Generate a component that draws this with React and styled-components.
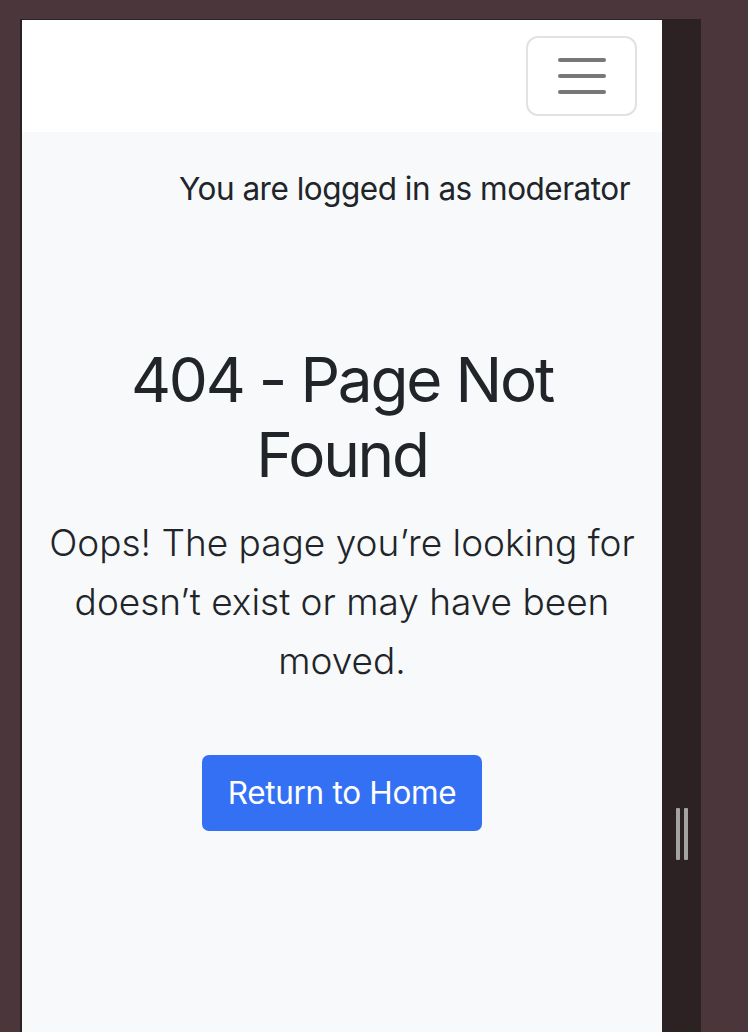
import React from 'react'
import styled, { createGlobalStyle } from 'styled-components'

const GlobalStyle = createGlobalStyle`
  html, body {
    margin: 0;
    padding: 0;
    background: #4a363b;
    height: 100%;
    overflow: hidden;
  }
  body {
    font-family: Inter, "Noto Sans", "Liberation Sans", sans-serif;
    color: #212529;
  }
`

const Desk = styled.div`
  display: flex;
  padding: 19px 0 0 20px;
  height: 1032px;
  box-sizing: border-box;
`

const Device = styled.div`
  display: flex;
  border-top: 1px solid #2a2124;
  border-left: 2px solid #2a2124;
`

const Screen = styled.div`
  width: 640px;
  display: flex;
  flex-direction: column;
  background: #f8f9fa;
`

const Navbar = styled.nav`
  height: 112px;
  background: #fff;
  display: flex;
  align-items: flex-start;
  justify-content: flex-end;
  padding: 16px 25px 0;
  box-sizing: border-box;
`

const Toggler = styled.button`
  width: 111px;
  height: 80px;
  border: 2px solid #e2e2e2;
  border-radius: 12px;
  background: transparent;
  display: flex;
  flex-direction: column;
  align-items: center;
  justify-content: center;
  gap: 12px;
  padding: 0;
`

const TogglerBar = styled.span`
  display: block;
  width: 48px;
  height: 4px;
  border-radius: 2px;
  background: #777;
`

const Main = styled.main`
  display: flex;
  flex-direction: column;
  padding: 0 24px;
`

const UserLine = styled.p`
  margin: 33px 8px 0 0;
  text-align: right;
  font-size: 31.5px;
  letter-spacing: -0.5px;
  line-height: 47px;
`

const NotFound = styled.section`
  margin-top: 130px;
  text-align: center;
  display: flex;
  flex-direction: column;
  align-items: center;
`

const Title = styled.h1`
  margin: 0;
  font-size: 62px;
  font-weight: 400;
  letter-spacing: -2.2px;
  line-height: 75px;
  max-width: 460px;
`

const Lead = styled.p`
  margin: 21px 0 0;
  font-size: 37px;
  font-weight: 300;
  line-height: 59px;
`

const HomeButton = styled.a`
  margin-top: 65px;
  display: inline-block;
  background: #3470f4;
  color: #fff;
  border: 2px solid #3470f4;
  border-radius: 7px;
  font-size: 31.5px;
  letter-spacing: -0.3px;
  line-height: 48px;
  padding: 12px 24px;
  text-decoration: none;
`

const Strip = styled.div`
  width: 39px;
  background: #2c2224;
  display: flex;
  justify-content: center;
  gap: 4px;
  padding-top: 788px;
  box-sizing: border-box;
`

const Grip = styled.span`
  width: 4px;
  height: 52px;
  border-radius: 1px;
  background: #a3a3a3;
`

export default function App() {
  return (
    <Desk>
      <GlobalStyle />
      <Device>
        <Screen>
          <Navbar>
            <Toggler aria-label="Toggle navigation">
              <TogglerBar />
              <TogglerBar />
              <TogglerBar />
            </Toggler>
          </Navbar>
          <Main>
            <UserLine>You are logged in as moderator</UserLine>
            <NotFound>
              <Title>404 - Page Not Found</Title>
              <Lead>Oops! The page you’re looking for doesn’t exist or may have been moved.</Lead>
              <HomeButton href="#">Return to Home</HomeButton>
            </NotFound>
          </Main>
        </Screen>
        <Strip>
          <Grip />
          <Grip />
        </Strip>
      </Device>
    </Desk>
  )
}
